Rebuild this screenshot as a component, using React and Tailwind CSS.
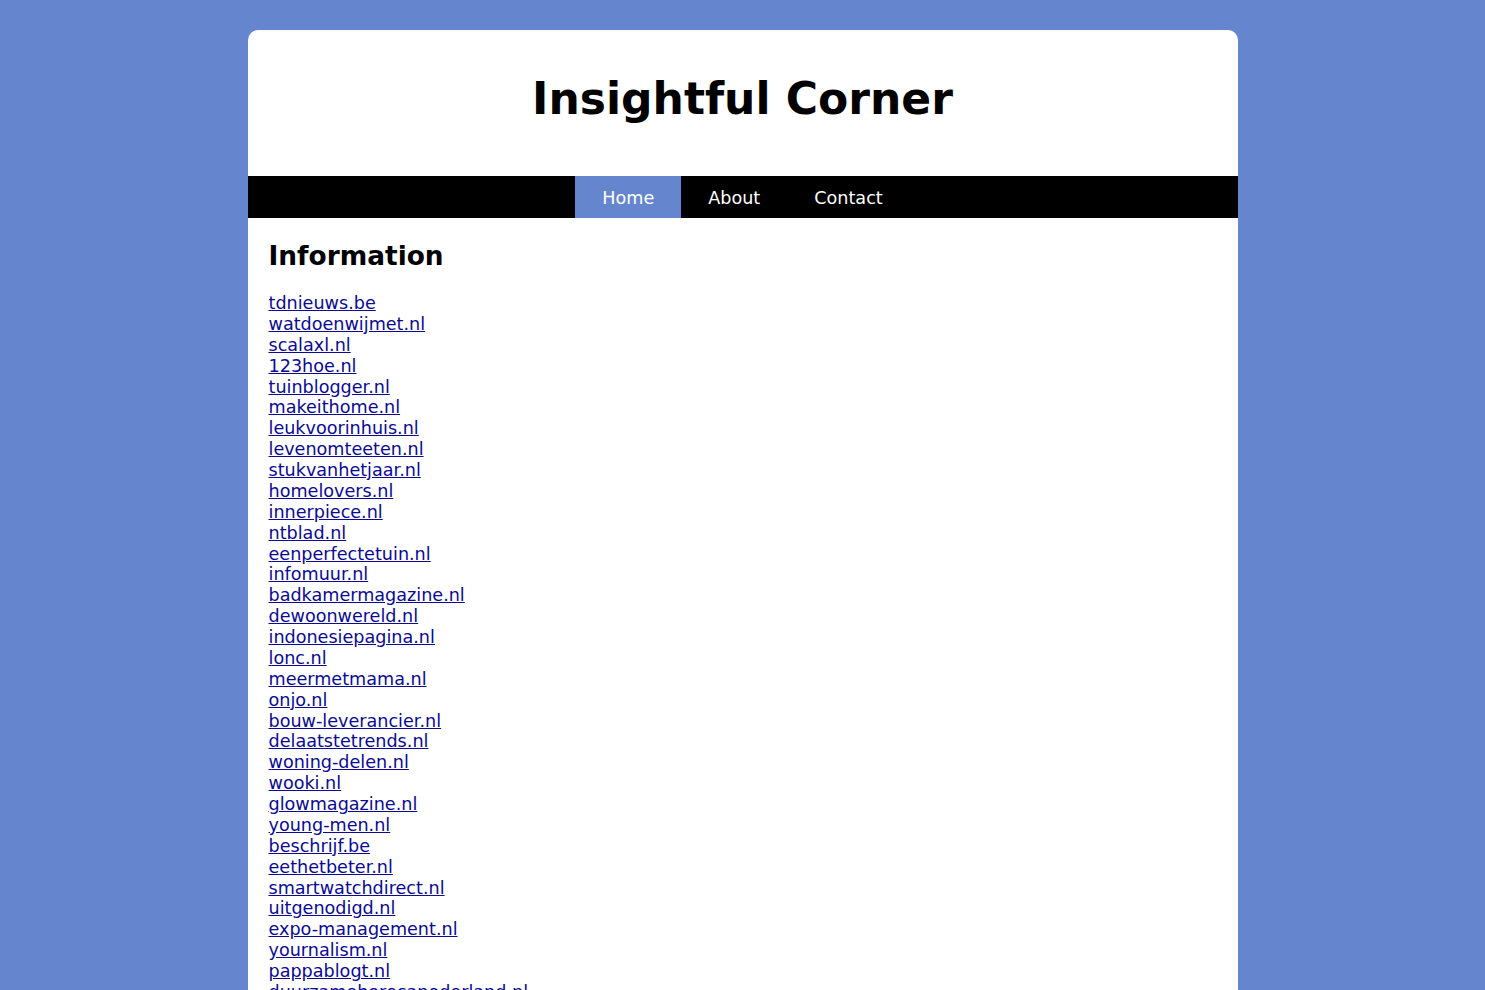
import React from 'react';

const sites = [
  'tdnieuws.be',
  'watdoenwijmet.nl',
  'scalaxl.nl',
  '123hoe.nl',
  'tuinblogger.nl',
  'makeithome.nl',
  'leukvoorinhuis.nl',
  'levenomteeten.nl',
  'stukvanhetjaar.nl',
  'homelovers.nl',
  'innerpiece.nl',
  'ntblad.nl',
  'eenperfectetuin.nl',
  'infomuur.nl',
  'badkamermagazine.nl',
  'dewoonwereld.nl',
  'indonesiepagina.nl',
  'lonc.nl',
  'meermetmama.nl',
  'onjo.nl',
  'bouw-leverancier.nl',
  'delaatstetrends.nl',
  'woning-delen.nl',
  'wooki.nl',
  'glowmagazine.nl',
  'young-men.nl',
  'beschrijf.be',
  'eethetbeter.nl',
  'smartwatchdirect.nl',
  'uitgenodigd.nl',
  'expo-management.nl',
  'yournalism.nl',
  'pappablogt.nl',
  'duurzamehorecanederland.nl',
];

const navItems = ['Home', 'About', 'Contact'];

export default function App() {
  return (
    <div
      className="min-h-screen bg-[#6585cf] pt-[30px] text-[17.6px]"
      style={{ fontFamily: '"DejaVu Sans", Verdana, sans-serif' }}
    >
      <div className="mx-auto w-[990px] rounded-[10px] bg-white overflow-hidden pb-10">
        <header className="pt-[43px] pb-[52px] text-center">
          <h1 className="text-[44px] font-bold leading-[51px] text-black">Insightful Corner</h1>
        </header>

        <nav className="flex justify-center bg-black">
          {navItems.map((item, i) => (
            <a
              key={item}
              href="#"
              className={`px-[27px] pt-[12px] pb-[10px] leading-[20px] text-white ${i === 0 ? 'bg-[#6585cf]' : ''}`}
            >
              {item}
            </a>
          ))}
        </nav>

        <main className="px-[21px] pt-[24px]">
          <h2 className="text-[26.4px] font-bold leading-[28px] text-black mb-[23px]">Information</h2>
          <ul>
            {sites.map((site) => (
              <li key={site} className="leading-[20.875px]">
                <a href="#" className="text-[#0a0a96] underline">
                  {site}
                </a>
              </li>
            ))}
          </ul>
        </main>
      </div>
    </div>
  );
}
